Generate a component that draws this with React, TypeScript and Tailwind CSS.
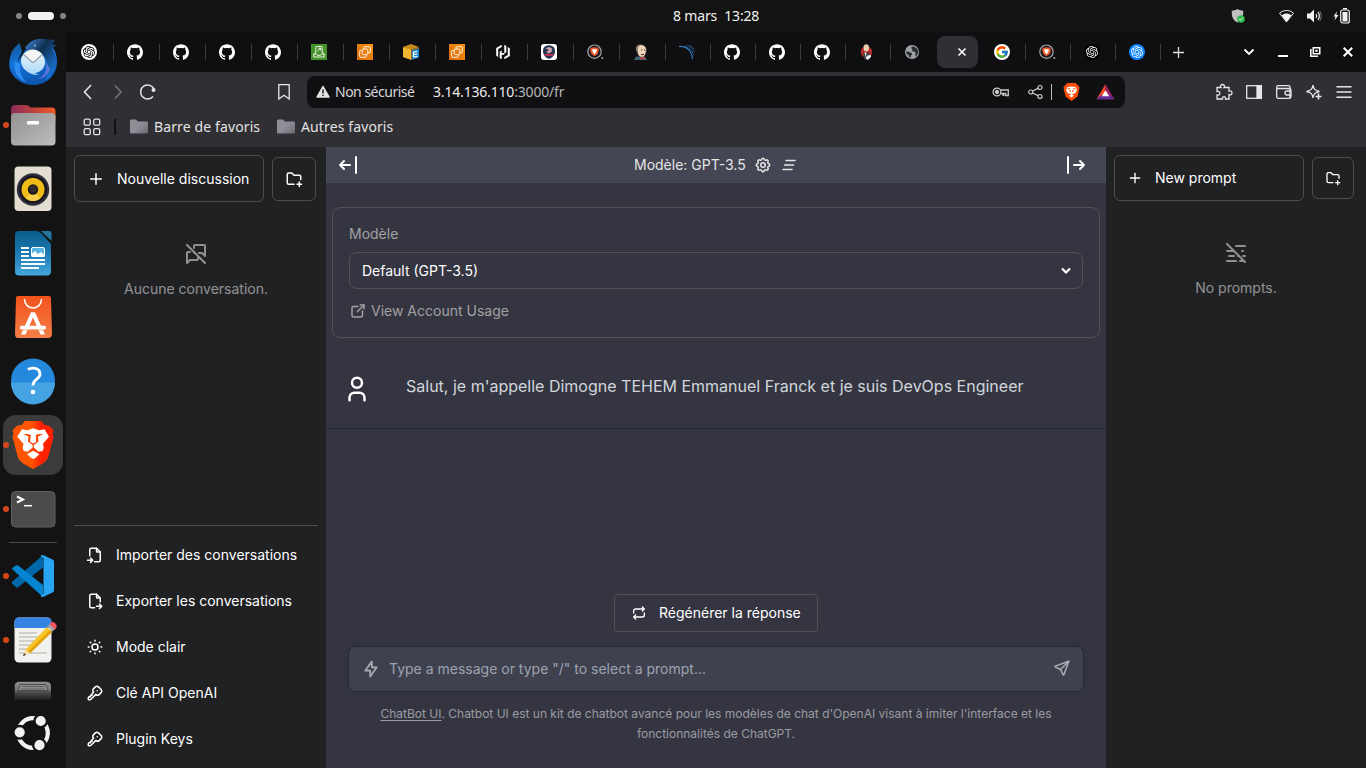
import React from "react";
import {
  TbPlus, TbFolderPlus, TbMessagesOff, TbMistOff, TbFileImport, TbFileExport, TbSun, TbKey,
  TbExternalLink, TbUser, TbRepeat, TbBolt, TbSend, TbSettings, TbClearAll,
} from "react-icons/tb";
import { SiGithub, SiOpenai } from "react-icons/si";
import { FcGoogle } from "react-icons/fc";

type Kids = { children?: React.ReactNode };

/* ---------- Dock ---------- */

const Slot = ({ children, dot, active }: Kids & { dot?: boolean; active?: boolean }) => (
  <div className="relative flex h-16 w-[66px] shrink-0 items-center justify-center">
    {active && <div className="absolute left-[3px] top-[2px] size-[60px] rounded-[13px] bg-[#3b3b3b]" />}
    {dot && <div className="absolute left-[3px] top-[29px] size-[6px] rounded-full bg-[#d4471a]" />}
    <svg viewBox="0 0 48 48" className="relative size-12 overflow-visible">{children}</svg>
  </div>
);

const Dock = () => (
  <div className="flex w-[66px] shrink-0 flex-col bg-[#131313]">
    <Slot>
      <defs>
        <linearGradient id="tb" x1="0" y1="0" x2="0.3" y2="1">
          <stop offset="0" stopColor="#14508f" />
          <stop offset="0.5" stopColor="#1373d9" />
          <stop offset="1" stopColor="#0d56b0" />
        </linearGradient>
        <linearGradient id="tbw" x1="0" y1="0" x2="0" y2="1">
          <stop offset="0" stopColor="#f5f5f5" />
          <stop offset="1" stopColor="#a5d8fb" />
        </linearGradient>
        <linearGradient id="tbh" x1="0" y1="0.3" x2="0.7" y2="1">
          <stop offset="0" stopColor="#2f68a9" />
          <stop offset="0.35" stopColor="#10304f" />
          <stop offset="1" stopColor="#1a71d0" />
        </linearGradient>
      </defs>
      <path d="M2 17C-1 26 0 33 4 38C8 44 16 48 24 48C38 48 48 38 48 25C48 18 46 12 42 9L28 4C22 6 18 10 15 15L8 26L13 14C12 11 11 9 11 6C5 10 3 14 2 17Z" fill="url(#tb)" />
      <path d="M16 11C20 4 28 1 35 2C39 2 43 3 46 3C45 5 44 6 43 7L47 8C45 10 44 11 43 12C47 17 48 25 45 32C43 38 40 42 36 43C42 32 39 20 31 17C25 15 20 14 16 11Z" fill="url(#tbh)" />
      <path d="M6 24C4 34 8 42 17 45C12 39 10 34 11 27Z" fill="#2f8df0" />
      <path d="M36 24C39 32 36 39 29 42C34 42 39 38 41 32" fill="#7a80e8" opacity="0.7" />
      <path d="M12 24C12 18 17 13 24 13C31 13 36 19 36 25C36 31 32 35 26 36C27 37 29 38 31 38C21 39 12 32 12 24Z" fill="url(#tbw)" />
      <path d="M15 17C19 11 28 11 33 17L25 24.500Q24 25.500 23 24.500Z" fill="#f4f4f4" />
      <path d="M14.500 17.500L23 25Q24 26 25 25L33.500 17.500" fill="none" stroke="#94a3b3" strokeWidth="1.200" />
      <circle cx="26" cy="8.500" r="0.9" fill="#9ec8ea" />
    </Slot>
    <Slot dot>
      <defs>
        <linearGradient id="fo" x1="0" y1="0" x2="1" y2="0"><stop offset="0" stopColor="#8a2a58" /><stop offset="1" stopColor="#ef5a24" /></linearGradient>
        <linearGradient id="fg" x1="0" y1="0" x2="1" y2="1"><stop offset="0" stopColor="#929292" /><stop offset="1" stopColor="#bdbdbd" /></linearGradient>
      </defs>
      <path d="M2 20V8C2 5.500 3.500 4 6 4H17C19 4 20 5 21.500 6.500H43C45.500 6.500 46.500 8 46.500 10V20Z" fill="url(#fo)" />
      <rect x="2" y="12" width="44.500" height="32.500" rx="4" fill="url(#fg)" />
      <rect x="18" y="20" width="12" height="3.500" rx="1.200" fill="#fff" />
    </Slot>
    <Slot>
      <rect x="5.500" y="1.500" width="37" height="44.500" rx="4" fill="#e3ddd2" />
      <circle cx="24" cy="24.500" r="16.200" fill="#30303c" />
      <circle cx="24" cy="24.500" r="14" fill="#191722" />
      <circle cx="24" cy="24.500" r="11.500" fill="#f0bd17" />
      <path d="M24 24.500L17 33.500A11.500 11.500 0 0 0 31 33.500Z" fill="#fbe069" opacity="0.6" />
      <circle cx="24" cy="24.500" r="5.200" fill="#1c1b1a" />
      <circle cx="24" cy="24" r="3.500" fill="#2e2d2c" />
    </Slot>
    <Slot>
      <defs>
        <linearGradient id="wr" x1="0" y1="0" x2="0" y2="1"><stop offset="0" stopColor="#0b5d8d" /><stop offset="0.45" stopColor="#1976ac" /><stop offset="1" stopColor="#45a7dd" /></linearGradient>
      </defs>
      <path d="M10 2H27C30 2 32 4 34 6L42 15V42C42 45 40.500 46.500 38 46.500H10C7 46.500 6 45 6 42V6C6 3.500 7 2 10 2Z" fill="url(#wr)" />
      <path d="M32 2H40C42 2 42.500 3 42.500 5V12Z" fill="#25769f" />
      <g fill="#f7fbfd">
        <rect x="12" y="18" width="8" height="2" /><rect x="12" y="22" width="8" height="2" /><rect x="12" y="26" width="8" height="2" />
        <rect x="12" y="30" width="24" height="2" /><rect x="12" y="34" width="24" height="2" /><rect x="12" y="38" width="18" height="2" />
      </g>
      <rect x="22.500" y="18.500" width="13" height="9" rx="1.500" fill="#57b3e4" stroke="#fff" strokeWidth="1" />
      <path d="M22.500 27V25L26 22L29 25L32 23L35.500 26V28H23Z" fill="#fff" />
    </Slot>
    <Slot>
      <defs>
        <linearGradient id="sw" x1="0" y1="0" x2="0" y2="1"><stop offset="0" stopColor="#f3531b" /><stop offset="0.3" stopColor="#f4602a" /><stop offset="1" stopColor="#f37f46" /></linearGradient>
      </defs>
      <path d="M9 3H40C41.500 3 42 4 42 5.500L43 41C43 43.500 41.500 45 39.500 45H9C7 45 6 43.500 6 41L7 5.500C7 4 7.500 3 9 3Z" fill="url(#sw)" />
      <path d="M15.500 6C15.500 11 19 15 24 15S32.500 11 32.500 6" fill="none" stroke="#fff" strokeWidth="1.500" />
      <path d="M22 19.300H26L36 41.500H31.500L24 24.500L16.500 41.500H12Z" fill="#fff" />
      <rect x="11" y="32.700" width="26" height="3.800" rx="1.500" fill="#fff" />
      <path d="M12 36.900H36" stroke="#f8a47c" strokeWidth="0.800" />
    </Slot>
    <Slot>
      <circle cx="24" cy="23.600" r="22" fill="#2489dc" />
      <path d="M2 25.500H46A22 22 0 0 1 2 25.500Z" fill="#45a3e4" />
      <path d="M19 12.500C22 10.500 31 10.200 31 17C31 22.500 24 22 24 28.500" fill="none" stroke="#fff" strokeWidth="2.800" />
      <circle cx="24" cy="35" r="2.300" fill="#fff" />
    </Slot>
    <Slot dot active>
      <defs>
        <linearGradient id="br" x1="0" y1="0" x2="1" y2="0"><stop offset="0" stopColor="#ff5500" /><stop offset="0.45" stopColor="#ff5500" /><stop offset="0.7" stopColor="#ff2000" /><stop offset="1" stopColor="#ff2000" /></linearGradient>
      </defs>
      <path d="M16 0H32L36 4.500C39 3.500 41 5 44.500 9.500L43.500 12.500L44.500 16L39.500 35C38.500 39 36 41 33 43L24 48L15 43C12 41 9.500 39 8.500 35L3.500 16L4.500 12.500L3.500 9.500C7 5 9 3.500 12 4.500Z" fill="url(#br)" />
      <path d="M13 8.300L18.500 9.300L24.200 7.300L30 9.300L35.500 8.300L40 15.700L33.800 23C35 25.500 35 27.500 33.700 30L29.300 30.800L24.300 26.800L19 30.800L14.800 30C13.500 27.500 13.500 25.500 14.600 23L8.300 15.700Z" fill="#fff" />
      <path d="M14.500 13C17 12.800 20 12.800 22 14.200C21 16 22 18 21 20.500L24.200 22.500L27.400 20.500C26.500 18 27.500 16 26.500 14.200C28.500 12.800 31.500 12.800 34 13L29 15.500L29.500 20.500L24.800 24V26.500L29.500 30.500H19L23.700 26.500V24L19 20.500L19.500 15.500Z" fill="#ff4200" fillRule="evenodd" />
      <path d="M22 14.500H26.500L26.800 20.500L24.200 22.300L21.700 20.500Z" fill="#fff" />
      <path d="M18 33.200C20 32 22 31 24.300 29.700C26.500 31 28.500 32 30.500 33.200C28.500 35 26.500 37 24.300 38C22 37 20 35 18 33.200Z" fill="#fff" />
    </Slot>
    <Slot dot>
      <rect x="2.500" y="6.500" width="43.500" height="35.500" rx="4" fill="#4b4b4b" stroke="#606060" />
      <path d="M8 11.500L14 14.500L8 17.500" fill="none" stroke="#fff" strokeWidth="2" />
      <path d="M15 20.700H23" stroke="#fff" strokeWidth="1.500" />
    </Slot>
    <div className="mx-[9px] mb-px mt-px h-px shrink-0 bg-[#4a4a4a]" />
    <Slot dot>
      <path d="M4 32.500C2.500 31.500 2.500 30 4 29L33.500 3.500L34.500 15L8 36Z" fill="#0068a8" />
      <path d="M4 15.500L7 13.500C8 13 8.500 13 9.500 13.700L34 33V45L3.500 17.500C2.500 16.500 3 16.200 4 15.500Z" fill="#0584d1" />
      <path d="M34 3L43.500 7.500C44.700 8 45 9 45 10V38C45 39 44.700 40 43.500 40.500L34 45C33 45.300 32 44.500 31.500 44L34.500 42V6L31.500 4C32 3.500 33 2.700 34 3Z" fill="#27a4f2" />
    </Slot>
    <Slot dot>
      <rect x="5.500" y="1.500" width="37" height="45" rx="4.500" fill="#f1f1f0" />
      <path d="M5.500 12V6C5.500 3 7 1.500 10 1.500H38C41 1.500 42.500 3 42.500 6V12Z" fill="#3683e4" />
      <path d="M10 17H28M10 21H32M10 25H28M10 29H22M10 33H18M10 37H38" stroke="#c5c3bb" strokeWidth="1.700" />
      <path d="M16 34L38 11L43 16L21 37Z" fill="#f7c52a" />
      <path d="M18.500 36L41 14L43 16L21 37.500Z" fill="#e5a50a" />
      <path d="M38.500 10.500L41 8L46 13L43.500 15.500Z" fill="#a5a9ad" />
      <path d="M40.500 8.500C42 6.500 43.500 5 46 7C48.500 9.500 48 11.500 46 13.500Z" fill="#f2565b" />
      <path d="M14 40L16.500 33.500L21.500 37Z" fill="#f9d9a0" />
      <path d="M14 40L15 37.200L17 39Z" fill="#333" />
    </Slot>
    <div className="flex h-[31px] shrink-0 items-end justify-center">
      <svg width="38" height="22" viewBox="0 0 38 22">
        <defs><linearGradient id="dr" x1="0" y1="0" x2="0" y2="1"><stop offset="0" stopColor="#909090" /><stop offset="0.45" stopColor="#777" /><stop offset="0.55" stopColor="#505050" /><stop offset="1" stopColor="#1e1e1e" /></linearGradient></defs>
        <path d="M.7 19V5C.7 2 3 .7 6 .7H32C35 .7 37 2 37 5V19Z" fill="url(#dr)" />
        <path d="M4 9.500L6 3.500H32L34 9.500Z" fill="#8f8f8f" stroke="#4c4c4c" />
        <path d="M8 5.500H30M7 8H31" stroke="#555" strokeWidth="0.800" />
      </svg>
    </div>
    <div className="flex h-[60px] shrink-0 items-center justify-center">
      <svg width="48" height="48" viewBox="0 0 48 48">
        <circle cx="24" cy="24" r="14.800" fill="none" stroke="#f2f2f2" strokeWidth="4.200" />
        <g fill="#f2f2f2" stroke="#131313" strokeWidth="2.400"><circle cx="10.700" cy="23.300" r="6.300" /><circle cx="31.700" cy="12" r="6.300" /><circle cx="30.500" cy="36.200" r="6.300" /></g>
      </svg>
    </div>
  </div>
);

/* ---------- Favicons ---------- */

const Gh = () => <SiGithub size={16} color="#fff" />;
const Ec2 = () => (
  <svg width="16" height="16" viewBox="0 0 16 16">
    <defs><linearGradient id="ec" x1="0" y1="1" x2="1" y2="0"><stop offset="0" stopColor="#d96a0c" /><stop offset="1" stopColor="#f8930c" /></linearGradient></defs>
    <rect width="16" height="16" fill="url(#ec)" />
    <g fill="none" stroke="#fff" strokeWidth="0.900"><path d="M5 6.500H3.500C3 6.500 2.700 6.800 2.700 7.300V12.500C2.700 13 3 13.300 3.500 13.300H8.500C9 13.300 9.300 13 9.300 12.500V11" /><rect x="5.200" y="5" width="5.600" height="5.600" rx="1.200" /><path d="M7 5V3.500C7 3 7.300 2.700 7.800 2.700H12.500C13 2.700 13.300 3 13.300 3.500V8C13.300 8.500 13 8.800 12.500 8.800H11" /></g>
  </svg>
);
const BraveSearch = () => (
  <svg width="17" height="16" viewBox="0 0 17 16">
    <circle cx="7.500" cy="7.700" r="6.700" fill="#1c1c1e" stroke="#a5a5a8" strokeWidth="1.200" />
    <path d="M4.500 3.500H10.500L12 5.500L10.700 10L7.500 12.200L4.300 10L3 5.500Z" fill="#f1562b" />
    <path d="M5 5.500L7.500 5L10 5.500L9.300 8L7.500 10.500L5.700 8Z" fill="#fff" />
    <circle cx="15.300" cy="14" r="1" fill="#aaa" />
  </svg>
);
const Ai = ({ kind }: { kind: "white" | "black" | "blue" }) => (
  <div className={"flex size-4 items-center justify-center rounded-full " + (kind === "white" ? "bg-white text-black" : kind === "black" ? "bg-black text-white" : "bg-[#0a84ff] text-white")}>
    <SiOpenai size={12} />
  </div>
);
const Green = () => (
  <svg width="16" height="16" viewBox="0 0 16 16"><rect width="16" height="16" fill="#43922a" /><g fill="none" stroke="#fff" strokeWidth="0.900"><path d="M4.800 9V3.200C4.800 2.800 5 2.500 5.500 2.500H10.500C11 2.500 11.200 2.800 11.200 3.200V9" /><path d="M6.500 7L9.500 4.300M7.500 4.300H9.500V6.300" /><path d="M4.500 8.500L2.800 10V13H13.200V10L11.500 8.500M2.800 10H5.500L6.500 11.300H9.500L10.500 10H13.200" /></g></svg>
);
const Box = () => (
  <svg width="16" height="16" viewBox="0 0 16 16"><path d="M0 3L8 0L16 3L8 6Z" fill="#c98a1c" /><path d="M0 3L8 5.500V16L0 13Z" fill="#f2b62f" /><path d="M8 5.500L16 3V13L8 16Z" fill="#9c6513" /><path d="M8.800 6.300L16 4.500V14L8.800 15.500Z" fill="#1684cf" /><path d="M10.500 8L14.300 7.300M10.500 10.500L14.300 9.800M10.500 13L14.300 12.300M10.500 7.500V13.300" stroke="#fff" strokeWidth="1.200" /></svg>
);
const Hashi = () => (
  <svg width="16" height="16" viewBox="0 0 16 16"><path d="M6.700 .8L1.200 4V11.800L3.200 13V5.100L6.700 3.100ZM9.300 .8V9H6.700V6.600L4.700 7.700V14L6.700 15.200V10.800H9.300V9.400L11.300 8.300V2ZM12.800 3V10.900L9.300 12.900V15.200L14.800 12V4.200Z" fill="#fff" /></svg>
);
const Badge = () => (
  <svg width="16" height="16" viewBox="0 0 16 16"><rect width="16" height="16" rx="3" fill="#fff" /><path d="M8 1.300C11.500 1.300 14 3.500 14 7C14 11 11 14.700 8 14.700S2 11 2 7C2 3.500 4.500 1.300 8 1.300Z" fill="#283652" /><path d="M4.500 4.500L8 3L11 4.500L10.500 8L7 9.500L5.500 7.500L8.500 6Z" fill="#d9a8b2" /><path d="M3 10H13L11.500 12H4.500Z" fill="#b7344e" /></svg>
);
const Jenkins = () => (
  <svg width="16" height="16" viewBox="0 0 16 16"><path d="M1 16L3 12.500L12 12.500L14 16Z" fill="#3f6476" /><path d="M3 5C3 0 11-1 13 4C14 8 12 13 9 13.500C6 13 5 11 4.500 9Z" fill="#efd6b8" stroke="#3c332d" strokeWidth="0.600" /><path d="M3 5C3 1.500 5 .5 7 .7L5 4V8L3.500 7Z" fill="#8b7d70" /><path d="M8 6H9.200M11 6H12M8 10.500H11" stroke="#3b2a22" /><path d="M7 13L9 14.300L12 12.700V15.500L9 14.700L7 15.500Z" fill="#d33833" /></svg>
);
const Kali = () => (
  <svg width="16" height="16" viewBox="0 0 16 16" fill="none" stroke="#2f7fc1"><path d="M0 2.500C8 2 13 7 13.500 15" strokeWidth="1.200" /><path d="M5 2C9 3 13 6 15 11M8 1C11 2 14 5 15.500 8M11 1L15 5" strokeWidth="0.600" /></svg>
);
const Jenk2 = () => (
  <svg width="16" height="16" viewBox="0 0 16 16"><circle cx="7.500" cy="8" r="5.800" fill="#b52a26" /><path d="M4.500 3C4.500-.8 10-.8 10 3C10 6 9.500 7.500 7.500 7.500S4.500 6 4.500 3Z" fill="#e8cfae" /><path d="M4 8L7.500 9.500L10 8L11 15.500H5.500Z" fill="#34424b" /><path d="M5.500 7.500L7.500 9.500L6.500 13ZM8.500 11.500L12 11V13L8.500 16L6.500 14Z" fill="#f2f2f2" /></svg>
);
const Globe = () => (
  <svg width="16" height="16" viewBox="0 0 16 16"><circle cx="8" cy="8" r="7" fill="#9aa0a6" /><path d="M2.500 7.500C4.500 7.500 5 8 7 8.700C8.500 9.200 8.300 11 7 11.500L6.500 13.500L5 13V11.500L2.500 9.800ZM9 2.200L7 3.800L8.500 5.500L7.500 7L10 7.500C12 8 12 9.500 11 11L12 12.500L14 9V6L12 3.800Z" fill="#2a2b2e" /></svg>
);
const Google = () => (
  <div className="flex size-4 items-center justify-center rounded-full bg-white"><FcGoogle size={14} /></div>
);

const Tab = ({ children, narrow, last }: Kids & { narrow?: boolean; last?: boolean }) => (
  <div className={"flex h-10 shrink-0 items-center justify-between pl-[13px] " + (narrow ? "w-[45px]" : "w-[46px]")}>
    {children}
    {!last && <div className="h-4 w-px bg-[#3c3c3f]" />}
  </div>
);

const wide = [<Ai kind="white" />, <Gh />, <Gh />, <Gh />, <Gh />, <Green />, <Ec2 />, <Box />, <Ec2 />, <Hashi />, <Badge />, <BraveSearch />, <Jenkins />];
const slim = [<Kali />, <Gh />, <Gh />, <Gh />, <Jenk2 />];
const after = [<Google />, <BraveSearch />, <Ai kind="black" />, <Ai kind="blue" />];

const TabStrip = () => (
  <div className="flex h-10 shrink-0 items-center bg-[#0f0f11] pl-[2px]">
    {wide.map((c, i) => <Tab key={i}>{c}</Tab>)}
    {slim.map((c, i) => <Tab key={i} narrow>{c}</Tab>)}
    <Tab narrow last><Globe /></Tab>
    <div className="ml-px mr-[3px] flex h-8 w-[41px] shrink-0 items-center justify-end rounded-lg bg-[#303034] pr-3">
      <svg width="8" height="8" viewBox="0 0 8 8" stroke="#fff" strokeWidth="1.500"><path d="M.5 .5L7.500 7.500M7.500 .5L.5 7.500" /></svg>
    </div>
    {after.map((c, i) => <Tab key={i} narrow>{c}</Tab>)}
    <div className="flex w-[35px] shrink-0 items-center justify-center">
      <svg width="11" height="11" viewBox="0 0 11 11" stroke="#ddd" strokeWidth="1.300"><path d="M5.500 0V11M0 5.500H11" /></svg>
    </div>
    <div className="ml-9 flex items-center text-white">
      <svg width="34" height="16" viewBox="0 0 34 16" fill="none" stroke="currentColor" strokeWidth="1.800"><path d="M12.500 5.500L17 10L21.500 5.500" /></svg>
      <svg width="34" height="16" viewBox="0 0 34 16" fill="none" stroke="currentColor" strokeWidth="2"><path d="M12 12H22" /></svg>
      <svg width="32" height="16" viewBox="0 0 32 16" fill="none" stroke="currentColor" strokeWidth="1.600"><path d="M13.300 3.800H19.700V9.800H13.300Z M10.800 5V12.200H18" /><path d="M15.300 6.800H17.700" strokeWidth="2" /></svg>
      <svg width="32" height="16" viewBox="0 0 32 16" fill="none" stroke="currentColor" strokeWidth="2"><path d="M11.700 3.800L20.200 12.300M20.200 3.800L11.700 12.300" /></svg>
    </div>
  </div>
);

/* ---------- Browser toolbar ---------- */

const ToolIcon = ({ children, className = "" }: Kids & { className?: string }) => (
  <div className={"flex w-[30px] shrink-0 items-center justify-center " + className}>
    <svg width="18" height="18" viewBox="0 0 18 18" fill="none" stroke="#e6e6e8" strokeWidth="1.300">{children}</svg>
  </div>
);

const Toolbar = () => (
  <div className="flex h-10 shrink-0 items-center bg-[#302f33] pl-[7px] font-['Noto_Sans',sans-serif]">
    <ToolIcon><path d="M12 2L5.500 9L12 16" strokeWidth="1.600" /></ToolIcon>
    <ToolIcon><path d="M6 2.500L12 9L6 15.500" stroke="#76767a" strokeWidth="1.500" /></ToolIcon>
    <ToolIcon><path d="M14 13.500A7 7 0 1 1 15.200 6.500" strokeWidth="1.500" /><circle cx="14.500" cy="7" r="2" fill="#e6e6e8" stroke="none" /></ToolIcon>
    <ToolIcon className="ml-[106px]"><path d="M3.800 1.700H14.200V16L9 12.300L3.800 16Z" /></ToolIcon>
    <div className="ml-2 flex h-8 w-[818px] shrink-0 items-center rounded-lg bg-[#101012] pl-[9px]">
      <svg width="14" height="14" viewBox="0 0 14 14"><path d="M7 1.500L13 12H1Z" fill="#e3e3e6" stroke="#e3e3e6" strokeWidth="1.500" strokeLinejoin="round" /><path d="M7 4.500V8.500M7 9.700V11" stroke="#101012" strokeWidth="1.400" /></svg>
      <span className="ml-[5px] w-[98px] shrink-0 whitespace-nowrap pb-[2px] text-[14px] tracking-[-0.5px] text-[#d8d8dc]">Non sécurisé</span>
      <span className="whitespace-nowrap pb-[2px] text-[14px] tracking-[-0.18px] text-[#b5b5ba]"><span className="text-[#ececef]">3.14.136.110</span>:3000/fr</span>
      <div className="ml-auto flex items-center pr-[10px]">
        <svg width="18" height="12" viewBox="0 0 18 12" fill="none" stroke="#c9c9cc" strokeWidth="1.300"><circle cx="5" cy="6" r="3.900" /><circle cx="5" cy="6" r="1.500" fill="#c9c9cc" /><path d="M8.500 4H16.300V9.500H13.700V7.500H11.700V9.300H11V7.500H8.700" /></svg>
        <svg className="ml-[18px]" width="15" height="16" viewBox="0 0 15 16" fill="none" stroke="#c9c9cc" strokeWidth="1.200"><circle cx="2.700" cy="8" r="2" /><circle cx="12" cy="3.500" r="2" /><circle cx="12" cy="12.500" r="2" /><path d="M4.600 7L10 4.400M4.600 9L10 11.600" /></svg>
        <div className="ml-2 h-4 w-px bg-[#bbb]" />
        <svg className="ml-[11px]" width="17" height="18" viewBox="0 0 17 18"><path d="M4.500 0H12.500L14.500 2L16.500 4L16 7L14.500 13.500L8.500 18L2.500 13.500L1 7L.5 4L2.500 2Z" fill="#ff4d0a" /><path d="M4.500 4L8.500 3.500L12.500 4L14 7L12.500 10L8.500 11.500L4.500 10L3 7Z M6 12.500L8.500 11.500L11 12.500L8.500 14.500Z" fill="#fff" /><path d="M4.500 6L7 5.700M12.500 6L10 5.700M7 7L7.500 9M10 7L9.500 9" stroke="#ff4d0a" /></svg>
        <svg className="ml-4" width="19" height="16" viewBox="0 0 19 16"><path d="M9.500 0L.500 15.500L9.500 11Z" fill="#ff4724" /><path d="M9.500 0L18.500 15.500L9.500 11Z" fill="#9e1f63" /><path d="M.500 15.500H18.500L14 11H5Z" fill="#662d91" /><path d="M9.500 6.300L5.800 12.300H13.200Z" fill="#fff" /></svg>
      </div>
    </div>
    <ToolIcon className="ml-[84px]"><path d="M2 4.500H6C4.800 2.800 6 1.500 7.500 1.500S10.200 2.800 9 4.500H14V8C16 7.500 17 8.500 17 10S15.500 12.300 14 11.500V16H10.500C11 14.500 10 13.700 9 13.700S7 14.500 7.500 16H2V12C4 12.500 4.800 11.500 4.800 10S3.500 8 2 8.500Z" /></ToolIcon>
    <ToolIcon><rect x="1.700" y="2.700" width="14.600" height="12.600" /><path d="M12 2.700H16.300V15.300H12Z" fill="#e6e6e8" /></ToolIcon>
    <ToolIcon><rect x="1.700" y="2.700" width="13.300" height="12.600" rx="1.500" /><path d="M2 5.500H14.500C15.800 5.500 16 6.500 16 7.500V13C16 14.500 15.500 15.300 14 15.300M16.300 8H12A2 2 0 0 0 12 12H16.300" /></ToolIcon>
    <ToolIcon><path d="M8 2C8.600 6 9.800 7.500 14.500 8.500C9.800 9.500 8.600 11 8 15C7.400 11 6.200 9.500 1.500 8.500C6.200 7.500 7.400 6 8 2Z" /><path d="M13.500 10.500V16.500M10.500 13.500H16.500" strokeWidth="1.600" /></ToolIcon>
    <ToolIcon><path d="M1.500 3.700H16.500M1.500 9H16.500M1.500 14.300H16.500" strokeWidth="1.400" /></ToolIcon>
  </div>
);

const FolderIcon = () => (
  <svg width="18" height="15" viewBox="0 0 18 15"><defs><linearGradient id="bf" x1="0" y1="0" x2="1" y2="1"><stop offset="0" stopColor="#909095" /><stop offset="0.5" stopColor="#8d8e98" /><stop offset="1" stopColor="#69696d" /></linearGradient></defs><path d="M0 2C0 1 .7 .5 1.500 .5H6L8 2.500H16.500C17.300 2.500 18 3 18 4V13C18 14 17.300 14.500 16.500 14.500H1.500C.7 14.500 0 14 0 13Z" fill="url(#bf)" /></svg>
);

const Bookmarks = () => (
  <div className="flex h-[35px] shrink-0 items-center bg-[#302f33] pb-[5px] pl-[17px] font-['Noto_Sans',sans-serif] text-[14px] tracking-[0.12px] text-[#e3e3e5]">
    <svg width="18" height="18" viewBox="0 0 18 18" fill="none" stroke="#e6e6e8" strokeWidth="1.300"><rect x="1.200" y="1.200" width="6" height="6" rx="1.500" /><rect x="10.700" y="1.200" width="6" height="6" rx="1.500" /><rect x="1.200" y="10.700" width="6" height="6" rx="1.500" /><rect x="10.700" y="10.700" width="6" height="6" rx="1.500" /></svg>
    <div className="ml-[13px] h-4 w-[2px] bg-[#111]" />
    <div className="ml-[14px] pb-[2px]"><FolderIcon /></div>
    <span className="ml-[6px] w-[123px] shrink-0 whitespace-nowrap pb-[2px]">Barre de favoris</span>
    <div className="pb-[2px]"><FolderIcon /></div>
    <span className="ml-[6px] whitespace-nowrap pb-[2px]">Autres favoris</span>
  </div>
);

/* ---------- Chat application ---------- */

const Row = ({ icon, label }: { icon: React.ReactNode; label: string }) => (
  <div className="flex items-center gap-3 p-3 text-[14px] leading-[18px] text-white">
    {icon}
    <span>{label}</span>
  </div>
);

const LeftBar = () => (
  <div className="flex w-[260px] shrink-0 flex-col bg-[#202123] p-2 text-[14px]">
    <div className="flex h-[47px] items-center gap-2">
      <div className="flex h-[47px] w-[190px] items-center gap-3 rounded-md border border-white/20 px-3 text-white"><TbPlus size={18} />Nouvelle discussion</div>
      <div className="flex size-11 items-center justify-center rounded-md border border-white/20 text-white"><TbFolderPlus size={18} /></div>
    </div>
    <div className="flex flex-1 flex-col items-center pt-10 text-white opacity-50">
      <TbMessagesOff size={24} />
      <span className="mt-3">Aucune conversation.</span>
    </div>
    <div className="flex flex-col gap-1 border-t border-white/20 pt-2">
      <Row icon={<TbFileImport size={18} />} label="Importer des conversations" />
      <Row icon={<TbFileExport size={18} />} label="Exporter les conversations" />
      <Row icon={<TbSun size={18} />} label="Mode clair" />
      <Row icon={<TbKey size={18} />} label="Clé API OpenAI" />
      <Row icon={<TbKey size={18} />} label="Plugin Keys" />
    </div>
  </div>
);

const RightBar = () => (
  <div className="flex w-[260px] shrink-0 flex-col bg-[#202123] p-2 text-[14px]">
    <div className="flex h-[46px] items-center gap-2">
      <div className="flex h-[46px] w-[190px] items-center gap-3 rounded-md border border-white/20 px-3 text-white"><TbPlus size={16} /><span className="pb-[2px]">New prompt</span></div>
      <div className="flex size-[42px] items-center justify-center rounded-md border border-white/20 text-white"><TbFolderPlus size={16} /></div>
    </div>
    <div className="flex flex-col items-center pt-10 text-white opacity-50">
      <TbMistOff size={24} />
      <span className="mt-3">No prompts.</span>
    </div>
  </div>
);

const BarArrow = ({ flip }: { flip?: boolean }) => (
  <svg width="24" height="24" viewBox="0 0 24 24" fill="none" stroke="#fff" strokeWidth="2" strokeLinecap="round" strokeLinejoin="round" className={flip ? "-scale-x-100" : ""}>
    <path d="M20 12H10M20 12L16 16M20 12L16 8M4 4V20" />
  </svg>
);

const Chat = () => (
  <div className="flex min-w-0 flex-1 flex-col bg-[#343541] text-[14px]">
    <div className="flex h-9 shrink-0 items-center bg-[#444654] px-[10px] text-neutral-200">
      <BarArrow flip />
      <div className="ml-[274px] flex items-center"><span className="pb-[2px]">Modèle: GPT-3.5</span><TbSettings size={18} className="ml-2" /><TbClearAll size={18} className="ml-2" /></div>
      <div className="ml-auto mr-[8px]"><BarArrow /></div>
    </div>
    <div className="mx-[6px] mt-6 flex h-[131px] shrink-0 flex-col rounded-lg border border-neutral-600 px-4 pt-4 text-neutral-400">
      <div className="leading-5">Modèle</div>
      <div className="mt-2 flex h-[37px] items-center justify-between rounded-lg border border-neutral-600 pl-3 pr-[10px] text-white">
        <span>Default (GPT-3.5)</span>
        <svg width="12" height="12" viewBox="0 0 12 12" fill="none" stroke="#fff" strokeWidth="2.200"><path d="M2 3.500L6 7.500L10 3.500" /></svg>
      </div>
      <div className="mt-3 flex items-center leading-5"><TbExternalLink size={18} className="mr-1" />View Account Usage</div>
    </div>
    <div className="mt-[23px] flex h-[68px] shrink-0 border-b border-gray-900/50 pl-4 pt-[13px]">
      <TbUser size={30} color="#fff" />
      <div className="ml-[34px] text-[16px] leading-6 text-[#d1d5db]">Salut, je m'appelle Dimogne TEHEM Emmanuel Franck et je suis DevOps Engineer</div>
    </div>
    <div className="mt-auto flex flex-col items-center pb-6">
      <div className="flex h-[38px] w-[204px] items-center gap-3 rounded border border-neutral-600 px-4 text-white"><TbRepeat size={16} /><span className="pb-[2px]">Régénérer la réponse</span></div>
      <div className="mt-[15px] flex h-[44px] w-[734px] items-center rounded-md bg-[#40414f] pl-3 pr-3 shadow-[0_0_0_1px_rgba(17,24,39,0.4),0_0_10px_rgba(0,0,0,0.1)]">
        <TbBolt size={20} className="text-neutral-100 opacity-60" />
        <span className="ml-2 flex-1 pb-[2px] text-[#9ca3af]">Type a message or type "/" to select a prompt...</span>
        <TbSend size={18} className="mb-[2px] text-neutral-100 opacity-60" />
      </div>
      <div className="mt-[13px] w-[734px] px-4 text-center text-[12px] leading-5 text-white/50"><span className="underline underline-offset-2">ChatBot UI</span>. Chatbot UI est un kit de chatbot avancé pour les modèles de chat d'OpenAI visant à imiter l'interface et les fonctionnalités de ChatGPT.</div>
    </div>
  </div>
);

export default function App() {
  return (
    <div className="flex h-[768px] w-[1366px] flex-col overflow-hidden bg-[#131313] font-['Inter',sans-serif]">
      <div className="flex h-[29px] shrink-0 items-center pt-[3px]">
        <div className="flex w-[673px] items-center pl-4">
          <div className="size-[6px] rounded-full bg-[#858585]" />
          <div className="ml-[6px] h-2 w-[26px] rounded-full bg-[#f2f2f2]" />
          <div className="ml-[6px] size-[6px] rounded-full bg-[#858585]" />
        </div>
        <span className="whitespace-pre pb-[2px] font-['Noto_Sans',sans-serif] text-[14px] tracking-[-0.15px] text-[#f2f2f2]">8 mars  13:28</span>
        <div className="ml-auto flex items-center pr-4">
          <svg width="15" height="16" viewBox="0 0 15 16"><path d="M6.500 1C4.500 2.300 3 2.600 .8 2.700C.6 8 1.500 12 6.500 14.500C11.500 12 12.400 8 12.200 2.700C10 2.600 8.500 2.300 6.500 1Z" fill="#c0c0c0" /><circle cx="10" cy="11" r="3.800" fill="#2db84b" /><path d="M8.200 11L9.500 12.300L11.800 9.800" fill="none" stroke="#fff" /></svg>
          <svg className="ml-[32px]" width="17" height="16" viewBox="0 0 17 16"><path d="M1.500 5.200C5.500 1.600 11.500 1.600 15.500 5.200L8.500 14Z" fill="none" stroke="#f2f2f2" /><path d="M3.700 7.200C6.500 5 10.500 5 13.300 7.200L8.500 14Z" fill="#f2f2f2" /></svg>
          <svg className="ml-[11px]" width="17" height="16" viewBox="0 0 17 16"><path d="M1 5.500H4L8 1.500V14.500L4 10.500H1Z" fill="#f2f2f2" /><path d="M10 6C11 7.300 11 8.700 10 10M12 4C13.700 6.500 13.700 9.500 12 12" fill="none" stroke="#f2f2f2" strokeWidth="1.200" /><path d="M13.700 3C15.700 6 15.700 10 13.700 13" fill="none" stroke="#777" /></svg>
          <svg className="ml-[10px]" width="17" height="16" viewBox="0 0 17 16"><path d="M4 3.500L.5 8.500H2.500L1.500 12.500L5.500 7H3.300Z" fill="#f2f2f2" /><rect x="7.700" y="2" width="8.600" height="13" rx="2" fill="none" stroke="#f2f2f2" strokeWidth="1.200" /><rect x="9.500" y="4" width="5" height="9.500" fill="#f2f2f2" /><path d="M10 .7H14" stroke="#f2f2f2" strokeWidth="1.400" /></svg>
        </div>
      </div>
      <div className="flex min-h-0 flex-1">
        <Dock />
        <div className="flex min-w-0 flex-1 flex-col pt-[3px]">
          <TabStrip />
          <Toolbar />
          <Bookmarks />
          <div className="flex min-h-0 flex-1">
            <LeftBar />
            <Chat />
            <RightBar />
          </div>
        </div>
      </div>
    </div>
  );
}
